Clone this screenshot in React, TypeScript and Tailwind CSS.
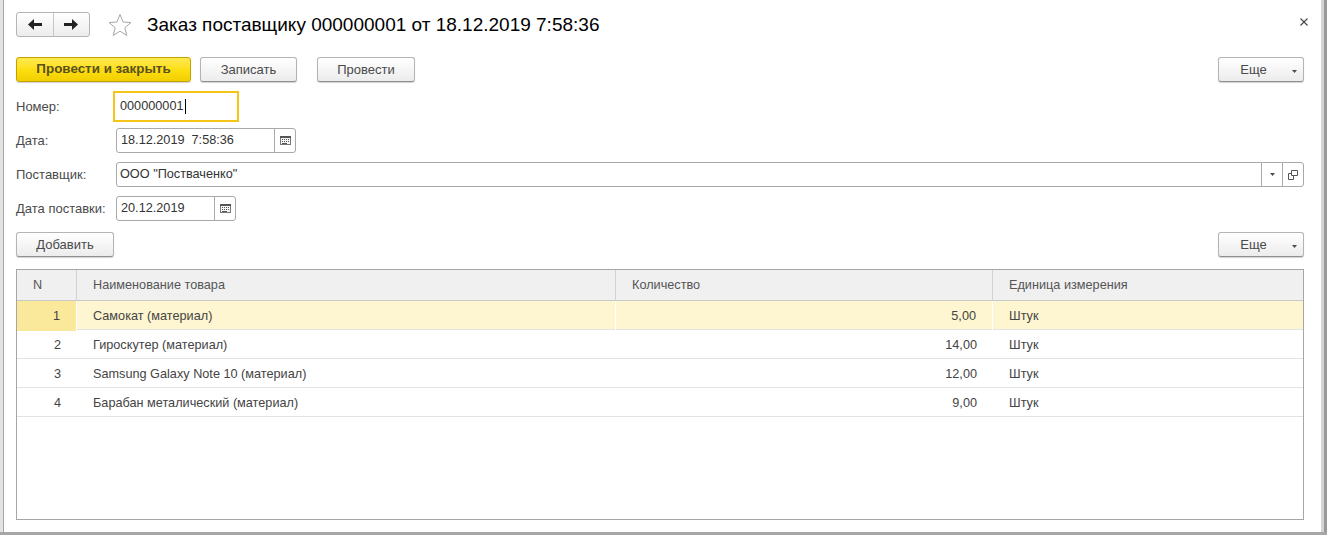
import type { ReactNode } from 'react';

const rows = [
  { n: 1, name: 'Самокат (материал)', qty: '5,00', unit: 'Штук' },
  { n: 2, name: 'Гироскутер (материал)', qty: '14,00', unit: 'Штук' },
  { n: 3, name: 'Samsung Galaxy Note 10 (материал)', qty: '12,00', unit: 'Штук' },
  { n: 4, name: 'Барабан металический (материал)', qty: '9,00', unit: 'Штук' },
];

const btn =
  'flex h-[25px] items-center justify-center rounded-[3px] border border-[#b4b4b4] border-b-[#8f8f8f] bg-gradient-to-b from-white to-[#ececec] text-[13px] text-[#4a4a4a] shadow-[0_1px_1px_rgba(0,0,0,0.18)]';

function Caret() {
  return (
    <svg width="5" height="3" viewBox="0 0 5 3" className="block">
      <path d="M0 0h5L2.500 3z" fill="#4a4a4a" />
    </svg>
  );
}

function CalendarIcon() {
  return (
    <svg width="11" height="9" viewBox="0 0 11 9" className="block">
      <rect x="0.500" y="0.500" width="10" height="8" fill="#f6f6f6" stroke="#777" />
      <path d="M0 1h11" stroke="#555" strokeWidth="2" />
      <path d="M2 3.500h1M4 3.500h1M6 3.500h1M8 3.500h1M2 5.500h1M4 5.500h1M6 5.500h1M8 5.500h1M2 7.500h5" stroke="#555" />
    </svg>
  );
}

function MoreButton() {
  return (
    <button className={`${btn} relative w-[86px]`}>
      <span className="mr-[15px]">Еще</span>
      <span className="absolute right-[6px] top-[12px]">
        <Caret />
      </span>
    </button>
  );
}

function Field({ label, children }: { label: string; children: ReactNode }) {
  return (
    <div className="flex items-center">
      <span className="w-[100px] text-[13px] text-[#4a4a4a]">{label}</span>
      {children}
    </div>
  );
}

function DateInput({ value, width }: { value: string; width: string }) {
  return (
    <div className={`flex h-[25px] rounded-[3px] border border-[#a9a9a9] bg-white ${width}`}>
      <span className="flex-1 whitespace-pre pl-[4px] text-[12.700px] leading-[23px] text-[#333]">{value}</span>
      <span className="flex w-[21px] items-center justify-center border-l border-[#a9a9a9]">
        <CalendarIcon />
      </span>
    </div>
  );
}

export default function App() {
  return (
    <div className="flex h-[535px] w-[1327px] flex-col overflow-hidden bg-[#a6a6a6] font-['Liberation_Sans',Arial,sans-serif]">
      <div className="flex h-[532px]">
        <div className="w-[3px] bg-[#e3e3e3]" />
        <div className="w-px bg-[#a6a6a6]" />

        <div className="flex-1 bg-white pl-[12px] pr-[17px] pt-[12px]">
          <div className="flex h-[25px] items-center">
            <div className="flex h-[25px] w-[74px] rounded-[3px] border border-[#b4b4b4] bg-gradient-to-b from-white to-[#ececec]">
              <button className="flex flex-1 items-center justify-center border-r border-[#c8c8c8]">
                <svg width="14" height="11" viewBox="0 0 14 11">
                  <path d="M0 5.500 6 0v4h8v3H6v4z" fill="#222" />
                </svg>
              </button>
              <button className="flex flex-1 items-center justify-center">
                <svg width="14" height="11" viewBox="0 0 14 11">
                  <path d="M14 5.500 8 0v4H0v3h8v4z" fill="#222" />
                </svg>
              </button>
            </div>
            <svg width="24" height="23" viewBox="0 0 24 23" className="ml-[18px]">
              <path d="M12 1.500l3 7.500 8 .6-6.200 5.100 2 7.800L12 18.200l-6.800 4.300 2-7.800L1 9.600l8-.6z" fill="#fff" stroke="#a8a8a8" />
            </svg>
            <h1 className="ml-[15px] text-[19px] leading-none text-black">Заказ поставщику 000000001 от 18.12.2019 7:58:36</h1>
            <button className="ml-auto mr-[-6px] mt-[-6px] flex h-[12px] w-[12px] items-center justify-center">
              <svg width="8" height="8" viewBox="0 0 8 8">
                <path d="M.5.500l7 7M7.500.500l-7 7" stroke="#444" strokeWidth="1.100" />
              </svg>
            </button>
          </div>

          <div className="mt-[20px] flex">
            <button className="h-[25px] w-[175px] rounded-[3px] border border-[#c2a100] bg-gradient-to-b from-[#ffe94d] via-[#fddf10] to-[#f2cf00] text-[13.400px] font-bold text-[#5a5020] shadow-[0_1px_1px_rgba(0,0,0,0.18)]">
              Провести и закрыть
            </button>
            <button className={`${btn} ml-[9px] w-[97px]`}>Записать</button>
            <button className={`${btn} ml-[20px] w-[98px]`}>Провести</button>
            <div className="ml-auto">
              <MoreButton />
            </div>
          </div>

          <div className="mt-[9px]">
            <Field label="Номер:">
              <div className="ml-[-3px] flex h-[31px] w-[126px] items-center border-2 border-[#f5c518] pl-[5px] text-[12.700px] text-[#333]">
                000000001
                <span className="ml-px h-[15px] w-px bg-black" />
              </div>
            </Field>
          </div>

          <div className="mt-[6px]">
            <Field label="Дата:">
              <DateInput value="18.12.2019  7:58:36" width="w-[180px]" />
            </Field>
          </div>

          <div className="mt-[9px]">
            <Field label="Поставщик:">
              <div className="flex h-[25px] flex-1 rounded-[3px] border border-[#a9a9a9] bg-white">
                <span className="flex-1 pl-[3px] text-[12.700px] leading-[23px] text-[#333]">ООО "Постваченко"</span>
                <span className="flex w-[21px] items-center justify-center border-l border-[#a9a9a9]">
                  <Caret />
                </span>
                <span className="flex w-[21px] items-center justify-center border-l border-[#a9a9a9]">
                  <svg width="10" height="10" viewBox="0 0 10 10">
                    <path d="M3.500.500h6v5h-6zM3.500 3.500H.500v6h5V6" fill="none" stroke="#555" />
                  </svg>
                </span>
              </div>
            </Field>
          </div>

          <div className="mt-[9px]">
            <Field label="Дата поставки:">
              <DateInput value="20.12.2019" width="w-[120px]" />
            </Field>
          </div>

          <div className="mt-[11px] flex justify-between">
            <button className={`${btn} w-[98px]`}>Добавить</button>
            <MoreButton />
          </div>

          <div className="mt-[12px] h-[251px] border border-[#a6a6a6] bg-white text-[12.700px]">
            <div className="grid h-[31px] grid-cols-[60px_539px_377px_1fr] border-b border-[#c8c8c8] bg-[#f0f0f0] leading-[30px] text-[#555]">
              <div className="border-r border-[#d2d2d2] pl-[16px]">N</div>
              <div className="border-r border-[#d2d2d2] pl-[16px]">Наименование товара</div>
              <div className="border-r border-[#d2d2d2] pl-[16px]">Количество</div>
              <div className="pl-[16px]">Единица измерения</div>
            </div>
            {rows.map((row, i) => (
              <div
                key={row.n}
                className={`grid h-[29px] grid-cols-[60px_539px_377px_1fr] border-b border-[#e2e2e2] leading-[30px] text-[#444] ${i === 0 ? 'bg-[#fdf6d0]' : ''}`}
              >
                <div className={`pr-[16px] text-right ${i === 0 ? 'border-r border-white bg-[#fbe99b]' : ''}`}>{row.n}</div>
                <div className={`pl-[16px] ${i === 0 ? 'border-r border-white' : ''}`}>{row.name}</div>
                <div className={`pr-[16px] text-right ${i === 0 ? 'border-r border-white' : ''}`}>{row.qty}</div>
                <div className="pl-[16px]">{row.unit}</div>
              </div>
            ))}
          </div>
        </div>

        <div className="w-[3px] bg-[#d4d4d4]" />
        <div className="w-[3px] bg-[#9a9a9a]" />
      </div>
    </div>
  );
}
